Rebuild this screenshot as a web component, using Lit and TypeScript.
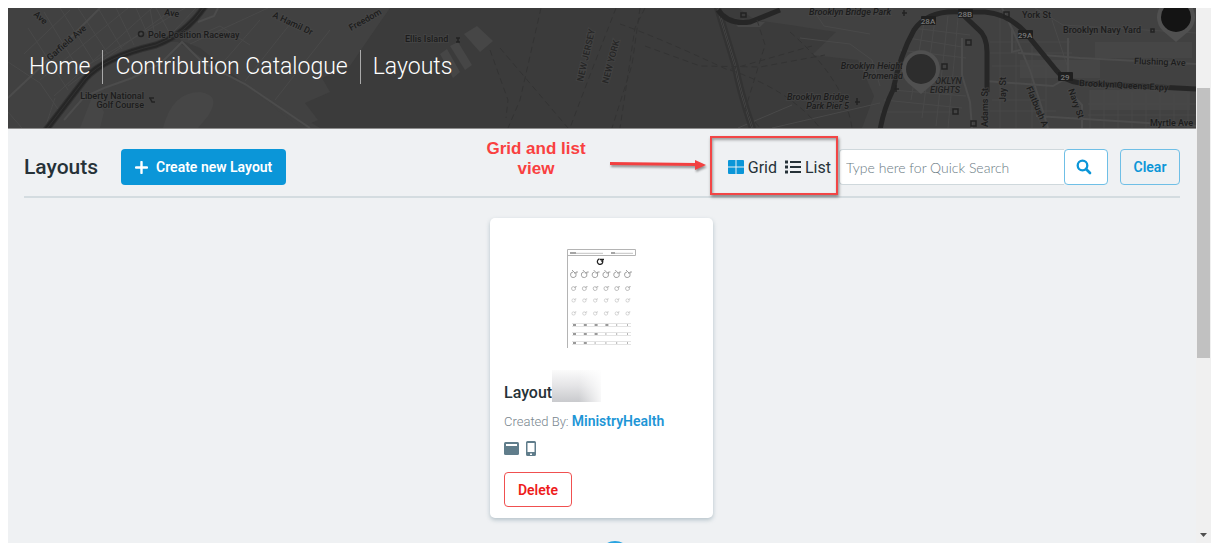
import { LitElement, html, css, svg } from "lit";
import { customElement, state } from "lit/decorators.js";

@customElement("map-backdrop")
class MapBackdrop extends LitElement {
  static styles = css`
    :host { display: block; overflow: hidden; background: #3b3b3b; }
    svg { display: block; width: 100%; height: 100%; }
    text { font-family: Roboto, "Liberation Sans", sans-serif; font-size: 9px; font-weight: 500; fill: #1c1c1c; stroke: #4a4a4a; stroke-width: 2px; stroke-opacity: 0.5; paint-order: stroke; }
    .park { font-style: italic; }
    .end { text-anchor: end; }
    .state { fill: #262626; font-size: 9px; }
    .district { fill: #222; font-style: italic; }
    .shield { fill: #1f1f1f; }
    .shield-text { font-size: 8px; fill: #777; stroke: none; text-anchor: middle; }
    .land { fill: #414141; }
    .block { fill: #464646; }
    .street { fill: none; stroke: #494949; stroke-width: 1; }
    .avenue { fill: none; stroke: #4c4c4c; stroke-width: 2; }
    .casing { fill: none; stroke: #333; stroke-width: 7; }
    .highway { fill: none; stroke: #262626; stroke-width: 5; }
    .center { fill: none; stroke: #323232; stroke-width: 1; }
    .ferry { fill: none; stroke: #333; stroke-width: 1; stroke-dasharray: 6 4; }
    .poi { fill: none; stroke: #232323; stroke-width: 1.5; }
    .pin { fill: #505050; }
    .pin-dark { fill: #141414; }
    .pin-mid { fill: #2d2d2d; }
  `;
  private shield(x: number, y: number, label: string) {
    return svg`<rect class="shield" x=${x} y=${y} width="15" height="9" rx="1"/><text class="shield-text" x=${x + 7} y=${y + 8}>${label}</text>`;
  }
  private pin(x: number, y: number, tone: string) {
    return svg`<g transform="translate(${x} ${y})"><path class="pin" d="M0 25 L-13 14 A19 19 0 1 1 13 14Z"/><circle class=${tone} r="15"/></g>`;
  }
  render() {
    return html`<svg viewBox="8 8 1188 120" preserveAspectRatio="xMidYMid slice" aria-hidden="true">
      <path class="land" d="M8 8H202L192 26L158 42L178 42L215 66L320 128H8Z"/>
      <path class="land" d="M230 8H390L376 28L350 66L322 78L330 92L305 103L318 120L300 128L220 64L200 48L180 40L205 8Z"/>
      <path class="land" d="M738 8H1196V128H862L874 96L858 60L812 55L836 32L790 25L755 20Z"/>
      <path class="block" d="M163 128Q172 92 200 92Q222 95 208 116L198 128ZM80 128L94 92L104 112L100 128Z"/>
      <path class="block" d="M440 54L447 49L460 72L453 78ZM450 46L458 42L472 65L465 70ZM464 34L477 26L493 41L480 52Z"/>
      <path class="block" d="M1020 60H1100V78H1020ZM1095 42H1192V58H1095ZM1090 90H1190V110H1090ZM730 18L765 22L760 27L738 27Z"/>
      <path class="street" d="M22 128L8 112M24 54L70 10M40 80L128 8M54 96L152 8M68 86L165 15M76 72L185 8M28 28L68 90M44 12L82 75M60 8L94 62M78 8L108 54M98 8L122 49M116 8L134 45M136 8L150 40M156 8L170 34M8 62L40 83L60 112M55 98L45 128M150 9L155 36M174 31L196 8M188 40L220 26L250 45M190 44L268 8M220 66L260 20M245 81L290 24M275 100L330 30"/>
      <path class="street" d="M880 112H960M884 100L962 108M892 90L966 96M900 50L966 58M908 38L962 47M912 28L970 35M924 22L911 100M935 19L922 118M948 16L936 126M958 18L948 128M990 42H1070M990 53H1072M992 66H1060M992 100H1045M990 111H1056M1000 10V128M1016 30V128M1032 46V128M1046 60V128M1090 90V128M1104 90V128M1118 91V128M1132 92V128M1146 93V128M1160 93V128M1174 94V128M1188 94V128M1088 104H1196M1088 115H1196"/>
      <path class="street" d="M738 128L792 105M800 38L850 44L872 60L880 86M812 8L824 26L870 34M772 128L880 103M1052 20L1068 68M1035 8L1063 25L1196 33"/>
      <path class="avenue" d="M8 98L48 60L100 8M64 120L84 97L104 88L132 78L160 64L182 42L202 62L245 84L310 128M198 22L214 16L218 8M1002 8L1015 35L1030 70L1048 128M962 38L962 75L970 102L972 128M985 81L1053 86L1070 76M1018 53L1080 58L1196 64M1068 90L1082 105V128M1036 116L1196 126M1068 38V80M1012 30V52L1020 50"/>
      <path class="casing" d="M205 6Q186 34 156 45Q104 57 85 79L46 130"/>
      <path class="highway" d="M205 6Q186 34 156 45Q104 57 85 79L46 130"/>
      <path class="center" d="M205 6Q186 34 156 45Q104 57 85 79L46 130"/>
      <path class="casing" d="M717 6L735 65Q740 92 753 130"/><path class="avenue" d="M717 6L735 65Q740 92 753 130"/><path class="center" d="M717 6L735 65Q740 92 753 130"/>
      <path class="highway" d="M718 10Q728 25 750 22L780 10M880 130Q884 108 893 90Q900 55 914 30Q928 10 960 12H985Q1008 14 1024 31L1056 70Q1064 81 1080 83L1198 89M960 12L978 29Q987 36 987 52V92"/>
      <path class="ferry" d="M541 8L520 100L508 128M616 8L590 75L570 128M645 8L635 28L620 128M640 8L632 65L612 128M490 50L508 100L506 118M620 24Q660 38 728 70L812 46M645 46L700 66L760 67L825 55M757 20L765 45L745 110L760 128M730 70Q790 90 820 128M790 32Q845 80 852 128M500 48L568 128"/>
      <circle class="poi" cx="141" cy="34" r="2.5"/><path class="poi" d="M149 98H154M150 98L152 102H155M456 38H460M456 42H460M458 38V42M741 13H746V17H741ZM966 40H971V45H966ZM942 64H947V69H942ZM953 109H958V114H953ZM1004 12H1009V17H1004ZM971 121H976V126H971ZM1151 29H1154V32H1151ZM904 10V16M902 13H907M857 98V105M855 102H860M896 85V92M894 89H899"/>
      ${this.shield(921, 16, "28A")}${this.shield(958, 9, "28B")}${this.shield(1018, 30, "29A")}${this.shield(1058, 72, "29")}
      <text x="148" y="38">Pole Position Raceway</text>
      <text transform="translate(50 61) rotate(-41)">Garfield Ave</text>
      <text transform="translate(33 15) rotate(42)">Ave</text>
      <text transform="translate(164 15) rotate(8)">Ave</text>
      <text transform="translate(272 17) rotate(25)">A Hamil Dr</text>
      <text transform="translate(351 31) rotate(-29)">Freedom</text>
      <text class="end" x="144" y="99">Liberty National</text><text class="end" x="144" y="108">Golf Course</text>
      <text x="405" y="42">Ellis Island</text>
      <text class="state" transform="translate(583 82) rotate(-77)">NEW JERSEY</text>
      <text class="state" transform="translate(608 84) rotate(-75)">NEW YORK</text>
      <text class="park" x="809" y="15">Brooklyn Bridge Park</text>
      <text class="park end" x="903" y="69">Brooklyn Height</text><text class="park end" x="903" y="79">Promenad</text>
      <text class="park end" x="849" y="100">Brooklyn Bridge</text><text class="park end" x="849" y="109">Park Pier 5</text>
      <text class="district" x="935" y="84">OKLYN</text><text class="district" x="930" y="93">EIGHTS</text>
      <text x="1022" y="18">York St</text><text x="1063" y="33">Brooklyn Navy Yard</text>
      <text transform="translate(1134 64) rotate(2)">Flushing Ave</text>
      <text transform="translate(1079 86) rotate(3)">Brooklyn Queens Expy</text>
      <text x="1150" y="126">Myrtle Ave</text>
      <text transform="translate(988 127) rotate(-90)">Adams St</text><text transform="translate(1006 102) rotate(-90)">Jay St</text>
      <text transform="translate(1026 88) rotate(67)">Flatbush A</text><text transform="translate(1068 90) rotate(70)">Navy St</text>
      ${this.pin(921, 69, "pin-mid")}${this.pin(1176, 17, "pin-dark")}
    </svg>`;
  }
}

@customElement("worksheet-preview")
class WorksheetPreview extends LitElement {
  static styles = css`
    :host { display: block; }
    svg { display: block; width: 69px; height: 99px; }
    .frame { fill: none; stroke: #b4b4b4; stroke-width: 1; }
    .rule { fill: none; stroke: #e4e4e4; stroke-width: 1; }
    .write { fill: none; stroke: #999; stroke-width: 0.6; }
    .label { fill: none; stroke: #888; stroke-width: 1.4; }
    .glyph { fill: none; stroke: #222; stroke-width: 1.3; }
    .g0 { stroke: #8a8a8a; stroke-width: 0.8; }
    .g1 { stroke: #999; stroke-width: 0.9; }
    .g2, .g3 { stroke: #b4b4b4; stroke-width: 0.9; }
    .mark { fill: #999; }
    .faint { fill: #b4b4b4; }
  `;
  render() {
    const cols = [0, 1, 2, 3, 4, 5];
    const rows = [{ y: 25, s: 1 }, { y: 39, s: 0.7 }, { y: 51, s: 0.6 }, { y: 64, s: 0.6 }];
    return html`<svg viewBox="0 0 69 99" role="img" aria-label="Layout preview">
      <path class="frame" d="M.5 99V.5H68.5V6.5H1"/>
      <path class="label" d="M3 4H9M44 4H48"/><path class="write" d="M9 4.3H36M48 4.3H66"/>
      <path class="glyph" d="M32.5 10A2.7 2.7 0 1 0 35.5 11.5M33 10.5H37M35 11V13"/>
      ${rows.map((r, i) => cols.map((c) => svg`<path class="glyph g${i}" transform="translate(${7 + c * 10.8} ${r.y}) scale(${r.s})" d="M-1 -2A2.8 2.8 0 1 0 2 0V-2H4M2 -1H0M${i ? -1 : -2} ${i ? -2 : -4}L1 -1"/>`))}
      ${[74, 83, 92].map((y, i) => svg`<path class="rule" d="M5 ${y + 0.5}H64M5 ${y + 3.5}H64"/>${cols.map((c) => svg`<rect class=${c < 4 - i ? "mark" : "faint"} x=${6 + c * 10.8} y=${y + 1} width=${c < 4 - i ? 3 : 1} height="2"/>`)}`)}
    </svg>`;
  }
}

@customElement("app-root")
class AppRoot extends LitElement {
  @state() private view = "grid";
  static styles = css`
    * { box-sizing: border-box; }
    :host { display: block; height: 100vh; padding: 8px 16px 3px 8px; box-sizing: border-box; background: #fff; font-family: Roboto, "Liberation Sans", sans-serif; color: #263238; }
    a { color: inherit; text-decoration: none; }
    button, input { font: inherit; margin: 0; }
    button { cursor: pointer; }
    .window { display: flex; height: 100%; overflow: hidden; background: #eff1f3; }
    .page { flex: 1; min-width: 0; display: flex; flex-direction: column; }
    .banner { display: grid; flex: none; height: 121px; border-bottom: 1px solid #8c8c8c; }
    .banner > * { grid-area: 1 / 1; min-width: 0; min-height: 0; }
    .crumbs { position: relative; display: flex; align-items: center; align-self: center; height: 34px; margin: 0 9px 2px; color: #fff; font-size: 23px; font-weight: 300; line-height: 34px; white-space: nowrap; }
    .crumbs a { padding: 0 12px; border-left: 1px solid #aaa; }
    .crumbs a:first-child { border-left: 0; }
    .toolbar { display: flex; align-items: center; flex: none; margin: 0 16px; padding: 20px 0 11px; border-bottom: 2px solid #d4dce0; }
    h1 { margin: 0 23px 0 0; font-size: 21px; line-height: 24px; font-weight: 500; }
    .btn { display: flex; align-items: center; justify-content: center; height: 36px; border-radius: 4px; font-size: 14px; font-weight: 600; white-space: nowrap; }
    .create { gap: 8px; padding: 0 14px; border: 0; background: #0b96d8; color: #fff; }
    .views { position: relative; display: flex; gap: 8px; margin-left: auto; margin-right: 8px; }
    .view { display: flex; align-items: center; gap: 4px; height: 36px; padding: 0; border: 0; background: none; color: #263238; font-size: 16px; }
    .view svg { display: block; color: #263238; }
    .view.on svg { color: #0b96d8; }
    .callout { position: absolute; top: -13px; right: -7px; display: flex; pointer-events: none; }
    .note { width: 104px; margin: 3px 22px 0 0; color: #f94040; font: bold 17px/20px "Liberation Sans", Arial, sans-serif; text-align: center; }
    .arrow { flex: none; margin-right: 4px; filter: drop-shadow(1px 2px 1px rgba(0, 0, 0, 0.4)); }
    .outline { width: 128px; height: 59px; border: 2px solid #f24646; box-shadow: 1px 2px 3px rgba(0, 0, 0, 0.45), inset 1px 2px 3px rgba(0, 0, 0, 0.35); }
    .search { display: flex; margin-right: 12px; }
    .search input { width: 225px; height: 36px; padding: 0 6px; border: 1px solid #cfd8dc; border-right: 0; border-radius: 4px 0 0 4px; outline: 0; background: #fff; font-family: Lato, sans-serif; font-size: 14px; font-weight: 300; }
    .search input::placeholder { color: #6a7a84; opacity: 1; }
    .outlined { border: 1px solid #6fbfe6; background: transparent; color: #0b96d8; }
    .go { width: 44px; padding: 0 4px 0 0; background: #fff; }
    .clear { width: 60px; padding: 0; }
    .cards { display: flex; flex-wrap: wrap; justify-content: center; flex: none; padding: 20px 17px 23px 16px; }
    .card { width: 223px; padding: 31px 14px 11px; border-radius: 5px; background: #fff; box-shadow: 0 2px 4px rgba(96, 125, 139, 0.4); }
    .preview { display: flex; justify-content: center; }
    .name { display: flex; align-items: flex-end; height: 32px; margin: 22px 0 0; font-size: 16px; line-height: 18px; font-weight: 500; }
    .redacted { width: 49px; height: 32px; background: linear-gradient(90deg, transparent 55%, rgba(255, 255, 255, 0.85)), linear-gradient(#fbfbfb, #e4e4e6 50%, #c9cacd); }
    .author { margin: 9px 0 6px; font-size: 13px; font-weight: 300; line-height: 20px; color: #78868e; white-space: nowrap; }
    .author a { color: #1e96d6; font-size: 14px; font-weight: 600; }
    .devices { display: flex; align-items: center; gap: 7px; height: 20px; margin-bottom: 14px; color: #607d8b; }
    .delete { width: 68px; height: 35px; padding: 0; border: 1px solid #f05050; background: #fff; color: #ee1c1c; }
    .pager { display: flex; justify-content: center; flex: none; padding-left: 26px; }
    .current { width: 32px; height: 32px; padding: 0; border: 0; border-radius: 50%; background: #29a3e0; color: #fff; }
    .scroll { display: flex; flex-direction: column; flex: none; width: 15px; background: #f0f0f0; }
    .before { flex: 80; }
    .thumb { flex: 270; margin: 0 1px; background: #c1c1c1; }
    .after { flex: 185; display: flex; align-items: flex-end; justify-content: center; }
    .after svg { margin-bottom: 6px; }
  `;
  render() {
    return html`
      <div class="window">
        <div class="page">
          <header class="banner">
            <map-backdrop></map-backdrop>
            <nav class="crumbs" aria-label="Breadcrumb"><a href="#home">Home</a><a href="#catalogue">Contribution Catalogue</a><a href="#layouts">Layouts</a></nav>
          </header>
          <div class="toolbar">
            <h1>Layouts</h1>
            <button class="btn create"><svg width="13" height="13" viewBox="0 0 13 13"><path d="M6.5 1V12M1 6.5H12" stroke="currentColor" stroke-width="2.4" stroke-linecap="round"/></svg>Create new Layout</button>
            <div class="views">
              <button class="view ${this.view === "grid" ? "on" : ""}" @click=${() => (this.view = "grid")}><svg width="16" height="14" viewBox="0 0 16 14" fill="currentColor"><path d="M1 0H7.5V6.5H0V1Q0 0 1 0ZM8.5 0H15Q16 0 16 1V6.5H8.5ZM0 7.5H7.5V14H1Q0 14 0 13ZM8.5 7.5H16V13Q16 14 15 14H8.5Z"/></svg>Grid</button>
              <button class="view ${this.view === "list" ? "on" : ""}" @click=${() => (this.view = "list")}><svg width="16" height="14" viewBox="0 0 16 14" fill="currentColor"><path d="M0 .5H3V3.5H0ZM0 5.5H3V8.5H0ZM0 10.5H3V13.5H0ZM5 1H16V3H5ZM5 6H16V8H5ZM5 11H16V13H5Z"/></svg>List</button>
              <div class="callout">
                <div class="note">Grid and list view</div>
                <svg class="arrow" width="96" height="59" viewBox="0 0 96 59"><path d="M0 27.5L86 28.5" stroke="#f24040" stroke-width="3"/><path d="M85 24L96 29L85 34Z" fill="#f24040"/></svg>
                <div class="outline"></div>
              </div>
            </div>
            <form class="search" @submit=${(e: Event) => e.preventDefault()}>
              <input type="text" aria-label="Quick Search" placeholder="Type here for Quick Search">
              <button class="btn outlined go" aria-label="Search"><svg width="16" height="16" viewBox="0 0 16 16" fill="none" stroke="currentColor"><circle cx="6.5" cy="6.5" r="4.8" stroke-width="2.3"/><path d="M10 10L14 14" stroke-width="2.7" stroke-linecap="round"/></svg></button>
            </form>
            <button class="btn outlined clear">Clear</button>
          </div>
          <main class="cards">
            <article class="card">
              <div class="preview"><worksheet-preview></worksheet-preview></div>
              <h2 class="name">Layout<span class="redacted"></span></h2>
              <p class="author">Created By: <a href="#author">MinistryHealth</a></p>
              <div class="devices">
                <svg width="15" height="13" viewBox="0 0 15 13"><rect width="15" height="13" rx="1.5" fill="currentColor"/><path d="M2 3H13" stroke="#fff" stroke-width="2"/></svg>
                <svg width="10" height="15" viewBox="0 0 10 15"><path fill="currentColor" fill-rule="evenodd" d="M1.5 0H8.5Q10 0 10 1.5V13.5Q10 15 8.5 15H1.5Q0 15 0 13.5V1.5Q0 0 1.5 0ZM1.5 2V11H8.5V2ZM4 12.5V14H6V12.5Z"/></svg>
              </div>
              <button class="btn delete">Delete</button>
            </article>
          </main>
          <nav class="pager" aria-label="Pages"><button class="current" aria-label="Current page"></button></nav>
        </div>
        <div class="scroll" aria-hidden="true"><div class="before"></div><div class="thumb"></div><div class="after"><svg width="7" height="4" viewBox="0 0 7 4"><path d="M0 0H7L3.5 4Z" fill="#505050"/></svg></div></div>
      </div>`;
  }
}
